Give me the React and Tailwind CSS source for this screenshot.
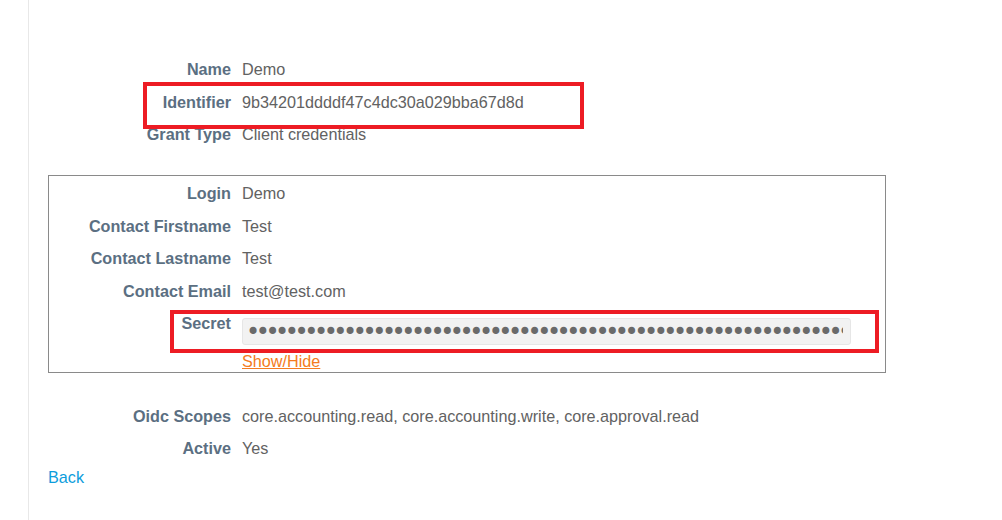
import React from "react";

function Row({ label, children, inBox }) {
  return (
    <div className="flex h-[32.5px] items-center">
      <div
        className={`${inBox ? "w-[182px]" : "w-[183px]"} shrink-0 text-right font-bold text-[#5b6f82]`}
      >
        {label}
      </div>
      <div className="pl-[11px] text-[#626262]">{children}</div>
    </div>
  );
}

export default function App() {
  const dots = "\u2022".repeat(64);
  return (
    <div className="relative h-[520px] w-[1002px] overflow-hidden bg-white font-['Liberation_Sans',Arial,sans-serif] text-[16.2px] leading-[20px]">
      <div className="ml-[28px] h-full border-l border-[#e8e8e8] pl-[19px] pt-[53px]">
        <Row label="Name">Demo</Row>
        <Row label="Identifier">9b34201ddddf47c4dc30a029bba67d8d</Row>
        <Row label="Grant Type">Client credentials</Row>

        <div className="mt-[24.5px] w-[838px] border border-[#8a8a8a] pt-[1px] pb-[1px]">
          <Row label="Login" inBox>Demo</Row>
          <Row label="Contact Firstname" inBox>Test</Row>
          <Row label="Contact Lastname" inBox>Test</Row>
          <Row label="Contact Email" inBox>test@test.com</Row>
          <div className="flex">
            <div className="w-[182px] shrink-0 text-right font-bold leading-[32px] text-[#5b6f82]">
              Secret
            </div>
            <div className="pl-[11px] pt-[11px]">
              <div className="flex h-[27px] w-[609px] items-center overflow-hidden whitespace-nowrap rounded-[3px] border border-[#e6e6e6] bg-[#f2f2f2] pl-[3px] pr-[7px]">
                <span className="block overflow-hidden font-['DejaVu_Sans',sans-serif] text-[24px] leading-[24px] tracking-[-4.45px] text-[#6a6a6a]">
                  {dots}
                </span>
              </div>
              <div className="mt-[6px]">
                <a href="#" className="text-[#f47b20] underline">
                  Show/Hide
                </a>
              </div>
            </div>
          </div>
        </div>

        <div className="mt-[26.5px]">
          <Row label="Oidc Scopes">
            core.accounting.read, core.accounting.write, core.approval.read
          </Row>
          <Row label="Active">Yes</Row>
        </div>
        <div className="mt-[2px]">
          <a href="#" className="text-[#0d9ddc]">
            Back
          </a>
        </div>
      </div>

      <div className="pointer-events-none absolute left-[143px] top-[82px] h-[47px] w-[441px] border-4 border-[#ed1c24]" />
      <div className="pointer-events-none absolute left-[170px] top-[310px] h-[43px] w-[709px] border-4 border-[#ed1c24]" />
    </div>
  );
}
